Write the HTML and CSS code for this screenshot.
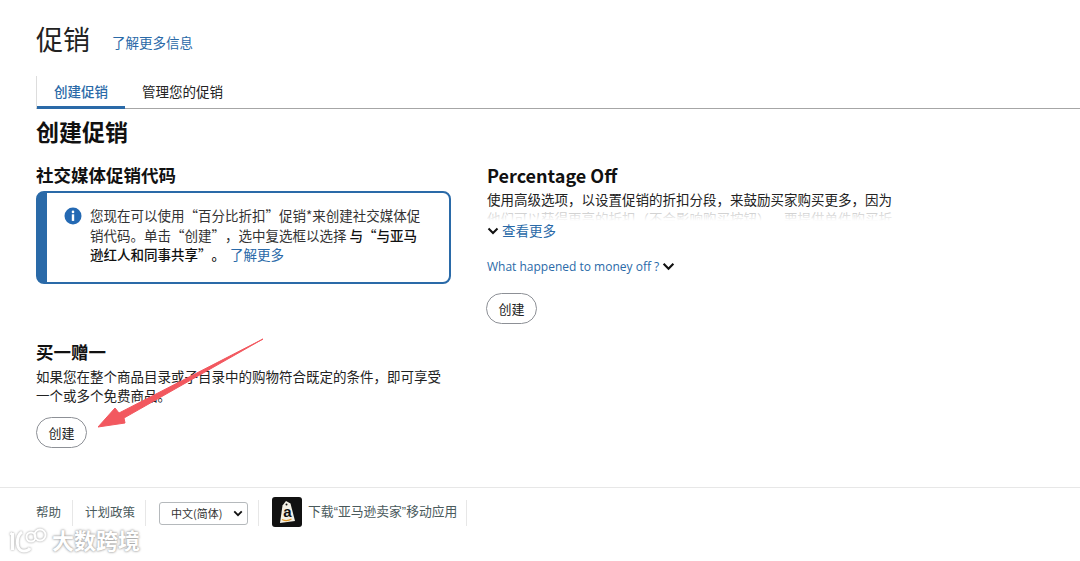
FILE: index.html
```html
<!DOCTYPE html>
<html lang="zh-CN">
<head>
  <meta charset="UTF-8" />
  <meta name="viewport" content="width=device-width, initial-scale=1.0" />
  <title>促销</title>
  <link rel="stylesheet" href="styles.css">
</head>
<body>
  <main class="page">
    <header class="page-head">
      <h1>促销</h1>
      <a class="link head-link">了解更多信息</a>
    </header>

    <nav class="tabs">
      <a class="tab active">创建促销</a>
      <a class="tab">管理您的促销</a>
    </nav>

    <h2 class="section-title">创建促销</h2>

    <div class="promo-grid">
      <section class="promo-col">
        <h3 class="promo-title">社交媒体促销代码</h3>
        <div class="alert">
          <svg class="alert-icon" viewBox="0 0 18 18" width="18" height="18">
            <circle cx="9" cy="9" r="8.5" fill="#2469b3"/>
            <circle cx="9" cy="4.9" r="1.3" fill="#fff"/>
            <rect x="7.8" y="7.3" width="2.4" height="6.6" fill="#fff"/>
          </svg>
          <p>您现在可以使用<span class="q">“百分比折扣”</span>促销*来创建社交媒体促销代码。单击<span class="q">“创建”，</span>选中复选框以选择 <b>与<span class="q">“与亚马逊红人和同事共享”。</span></b> <a class="link alert-link">了解更多</a></p>
        </div>
      </section>

      <section class="promo-col right">
        <h3 class="promo-title latin">Percentage Off</h3>
        <p class="clamped">使用高级选项，以设置促销的折扣分段，来鼓励买家购买更多，因为他们可以获得更高的折扣（不会影响购买按钮）。要提供单件购买折扣，请选择此项。</p>
        <a class="more">
          <svg class="chevron" viewBox="0 0 12 8" width="12" height="8"><path d="M1.5 1.5 6 6l4.5-4.5" fill="none" stroke="#111" stroke-width="2"/></svg>
          <span class="link">查看更多</span>
        </a>
        <a class="what">
          <span class="link">What happened to money off ?</span>
          <svg class="chevron" viewBox="0 0 12 8" width="13" height="9"><path d="M1.5 1.5 6 6l4.5-4.5" fill="none" stroke="#111" stroke-width="2"/></svg>
        </a>
        <button class="btn">创建</button>
      </section>
    </div>

    <section class="promo-col bogo">
      <h3 class="promo-title">买一赠一</h3>
      <p>如果您在整个商品目录或子目录中的购物符合既定的条件，即可享受一个或多个免费商品。</p>
      <button class="btn">创建</button>
    </section>
  </main>

  <footer class="footer">
    <a class="foot-item">帮助</a>
    <a class="foot-item">计划政策</a>
    <div class="foot-item">
      <div class="lang">中文(简体)
        <svg viewBox="0 0 12 8" width="10" height="7"><path d="M1.5 1.5 6 6l4.5-4.5" fill="none" stroke="#111" stroke-width="2.2"/></svg>
      </div>
    </div>
    <a class="foot-item app">
      <svg class="app-icon" viewBox="0 0 30 30" width="30" height="30">
        <rect width="30" height="30" rx="3" fill="#111"/>
        <path d="M10.500 8.500 14 4l4.500 2.500L23 24l-15 2z" fill="#f4f1e6"/>
        <circle cx="14.500" cy="7.500" r="1" fill="#111"/>
        <text x="15.500" y="20" text-anchor="middle" class="app-a">a</text>
        <path d="M10 22.500c3 1.600 6.500 1.400 9.500-.4" fill="none" stroke="#e39a2b" stroke-width="1.200"/>
      </svg>
      <span class="app-text">下载“亚马逊卖家”移动应用</span>
    </a>
  </footer>

  <svg class="arrow" viewBox="0 0 170 92" width="170" height="92">
    <path d="M0 89 17 70l4 5L165 1 26 80l1 5z" fill="#f2585f" stroke="#f2585f" stroke-width="1" stroke-linejoin="round"/>
  </svg>

  <div class="watermark">
    <svg viewBox="0 0 38 28" width="38" height="28">
      <path d="M3.500 6 1.500 8M3.500 6v17M13 5C7 9 6 24 15 24c3 0 5-1 6-3" fill="none" stroke="#fff" stroke-width="3"/>
      <circle cx="22" cy="10" r="4.500" fill="none" stroke="#fff" stroke-width="2"/>
      <circle cx="31" cy="8" r="5.500" fill="none" stroke="#fff" stroke-width="2"/>
    </svg>
    <span>大数跨境</span>
  </div>
</body>
</html>
```

FILE: styles.css
```css
* {
  box-sizing: border-box;
}

body {
  margin: 0;
  height: 561px;
  overflow: hidden;
  position: relative;
  background: #fff;
  color: #111;
  font-family: "Noto Sans CJK SC", "Noto Sans", sans-serif;
  font-size: 13.5px;
  line-height: 19px;
  text-spacing-trim: space-all;
}

p { margin: 0; }

.link { color: #2a6aa8; }

.q { font-variant-east-asian: full-width; }

.page { padding: 21px 0 0 36px; }

.page-head {
  display: flex;
  align-items: center;
  gap: 22px;
  height: 36px;
}

.page-head h1 {
  margin: 0;
  font-size: 27px;
  font-weight: 400;
  line-height: 36px;
  color: #222;
}

.head-link { padding-top: 6px; }

.tabs {
  display: flex;
  margin-top: 19px;
  height: 33px;
  border-bottom: 1px solid #a6a6a6;
  border-left: 1px solid #ddd;
}

.tab {
  padding: 6px 17px 0;
  width: 88px;
  color: #222;
}

.tab + .tab { width: auto; }

.tab.active {
  color: #2a6aa8;
  font-weight: 500;
  height: 33px;
  border-bottom: 3px solid #2a6aa8;
}

.section-title {
  margin: 4px 0 0;
  font-size: 23px;
  line-height: 36px;
  font-weight: 700;
  color: #111;
}

.promo-grid {
  display: flex;
  margin-top: 14px;
  height: 177px;
}

.promo-col { width: 415px; }

.promo-col.right {
  width: 408px;
  margin-left: 36px;
}

.promo-title {
  margin: 0;
  font-size: 17.5px;
  line-height: 24px;
  font-weight: 700;
}

.promo-title.latin { font-size: 18px; }

.alert {
  display: flex;
  gap: 8px;
  margin-top: 4px;
  height: 93px;
  padding: 13px 12px 0 17px;
  border: 2px solid #2a6aa8;
  border-left: 11px solid #2a6aa8;
  border-radius: 8px;
}

.alert-icon { flex: none; margin-top: 1px; }

.alert p {
  width: 340px;
  color: #333;
  line-height: 19.500px;
}

.alert b { font-weight: 500; color: #111; }

.alert-link { margin-left: 2px; }

.clamped {
  position: relative;
  margin-top: 3px;
  height: 31px;
  overflow: hidden;
  color: #222;
}

.clamped::after {
  content: "";
  position: absolute;
  left: 0;
  right: 0;
  bottom: 0;
  height: 13px;
  background: linear-gradient(rgba(255,255,255,.65), #fff);
}

.more, .what {
  display: flex;
  align-items: center;
  gap: 3px;
}

.what { margin-top: 17px; font-family: "Open Sans", sans-serif; font-size: 12px; }

.btn {
  display: block;
  width: 51px;
  height: 31px;
  padding: 0;
  background: #fff;
  border: 1px solid #8d9096;
  border-radius: 16px;
  color: #222;
  font: inherit;
  font-size: 13px;
}

.right .btn { margin: 17px 0 0 -1px; }

.bogo p {
  margin-top: 3px;
  color: #222;
}

.bogo .btn { margin-top: 12px; }

.footer {
  position: absolute;
  left: 0;
  right: 0;
  top: 487px;
  display: flex;
  align-items: flex-start;
  padding: 12px 0 0 36px;
  border-top: 1px solid #e7e7e7;
  color: #4a5a5c;
  font-size: 12.500px;
}

.foot-item {
  display: flex;
  align-items: center;
  height: 26px;
  padding: 0 10px 3px 12px;
  border-right: 1px solid #e7e7e7;
}

.foot-item:first-child { padding: 0 11px 3px 0; }

.lang {
  display: flex;
  align-items: center;
  justify-content: space-between;
  width: 89px;
  height: 23px;
  margin: 3px 0 0 1px;
  padding: 0 4px 0 11px;
  border: 1px solid #b5b9bc;
  border-radius: 3px;
  color: #333;
  font-size: 11px;
}

.app { gap: 6px; padding: 0 9px 3px 13px; }

.app-icon { flex: none; }

.app-text {
  font-family: "Liberation Sans", "Noto Sans CJK SC", sans-serif;
  font-size: 12.800px;
}

.app-a {
  font: 700 15px "Liberation Sans", sans-serif;
  fill: #111;
}

.arrow {
  position: absolute;
  left: 98px;
  top: 338px;
}

.watermark {
  position: absolute;
  left: 9px;
  top: 525px;
  display: flex;
  align-items: flex-start;
  gap: 5px;
  color: #fff;
  font-size: 22px;
  line-height: 28px;
  font-weight: 700;
  text-shadow: 0 0 2px #999, 0 0 3px #aaa;
}

.watermark svg {
  margin-top: 2px;
  filter: drop-shadow(0 0 1px #999);
}
```
